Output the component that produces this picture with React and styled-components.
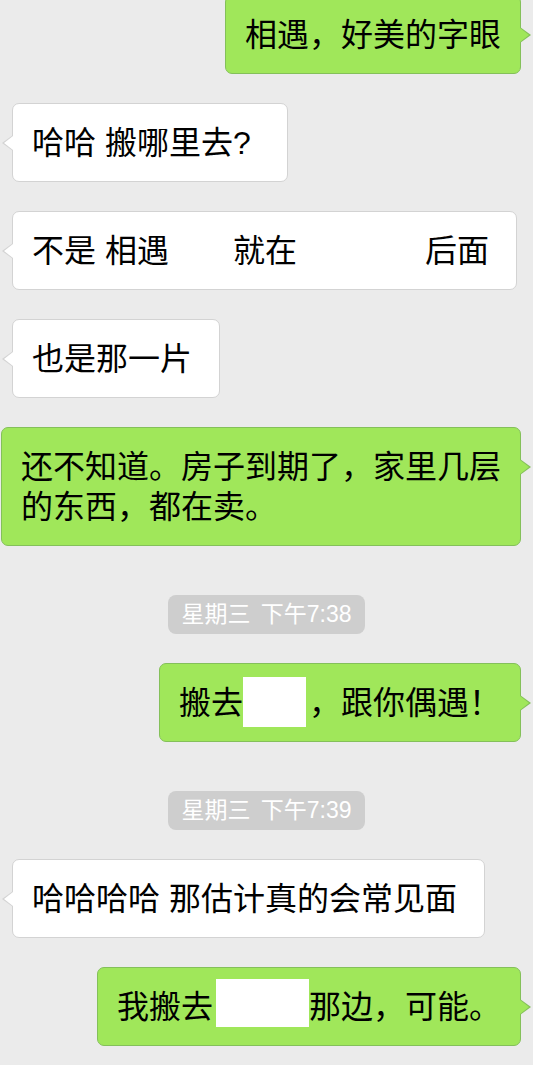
import React from "react";
import styled, { createGlobalStyle } from "styled-components";

const GlobalStyle = createGlobalStyle`
  html, body {
    margin: 0;
    padding: 0;
    background: #ebebeb;
  }
  body {
    font-family: "Liberation Sans", "Noto Sans CJK SC", sans-serif;
  }
`;

const Screen = styled.div`
  width: 533px;
  height: 1065px;
  overflow: hidden;
  background: #ebebeb;
`;

const Thread = styled.div`
  display: flex;
  flex-direction: column;
  gap: 29px;
  margin-top: -5px;
`;

const Row = styled.div`
  display: flex;
  justify-content: ${(p) => (p.$mine ? "flex-end" : "flex-start")};
  padding: ${(p) => (p.$mine ? "0 12px 0 0" : "0 0 0 12px")};
`;

const Bubble = styled.div`
  position: relative;
  box-sizing: border-box;
  max-width: 520px;
  padding: 19px ${(p) => (p.$mine ? 19 : 27)}px 18px 19px;
  border: 1px solid ${(p) => (p.$mine ? "#84c05a" : "#d3d3d3")};
  border-radius: 7px;
  background: ${(p) => (p.$mine ? "#a0e75a" : "#ffffff")};
  color: #000;
  font-size: 32px;
  line-height: 40px;
  word-break: break-all;

  &::before,
  &::after {
    content: "";
    position: absolute;
    width: 0;
    height: 0;
    border-style: solid;
    border-color: transparent;
  }

  &::before {
    top: 31px;
    ${(p) =>
      p.$mine
        ? `right: -11px; border-width: 8px 0 8px 11px; border-left-color: #84c05a;`
        : `left: -11px; border-width: 8px 11px 8px 0; border-right-color: #d3d3d3;`}
  }

  &::after {
    top: 32px;
    ${(p) =>
      p.$mine
        ? `right: -9px; border-width: 7px 0 7px 9px; border-left-color: #a0e75a;`
        : `left: -9px; border-width: 7px 9px 7px 0; border-right-color: #ffffff;`}
  }
`;

const Gap = styled.span`
  display: inline-block;
  width: ${(p) => p.$w}px;
`;

/* white patch hiding a place name in the original screenshot */
const Redacted = styled.span`
  display: inline-block;
  vertical-align: top;
  width: ${(p) => p.$w}px;
  height: ${(p) => p.$h}px;
  margin: ${(p) => -p.$lift}px ${(p) => p.$mr || 0}px
    ${(p) => 40 - p.$h + p.$lift}px ${(p) => p.$ml || 0}px;
  background: #ffffff;
`;

const Stamp = styled.div`
  align-self: center;
  margin-top: 20px;
  height: 39px;
  padding: 0 13px;
  border-radius: 8px;
  background: #cecece;
  color: #ffffff;
  font-size: 23px;
  line-height: 39px;
  word-spacing: 4px;
  white-space: nowrap;
`;

const Message = ({ mine, children }) => (
  <Row $mine={mine}>
    <Bubble $mine={mine}>{children}</Bubble>
  </Row>
);

export default function App() {
  return (
    <Screen>
      <GlobalStyle />
      <Thread>
        <Message mine>相遇，好美的字眼</Message>
        <Message>哈哈 搬哪里去?{"\u00a0"}</Message>
        <Message>
          不是 相遇<Gap $w={64} />就在<Gap $w={128} />后面
        </Message>
        <Message>也是那一片</Message>
        <Message mine>还不知道。房子到期了，家里几层的东西，都在卖。</Message>

        <Stamp>星期三 下午7:38</Stamp>
        <Message mine>
          搬去<Redacted $w={63} $h={50} $lift={6} $mr={3} />，跟你偶遇！
        </Message>

        <Stamp>星期三 下午7:39</Stamp>
        <Message>哈哈哈哈 那估计真的会常见面</Message>
        <Message mine>
          我搬去<Redacted $w={93} $h={48} $lift={8} $ml={3} />那边，可能。
        </Message>
      </Thread>
    </Screen>
  );
}
